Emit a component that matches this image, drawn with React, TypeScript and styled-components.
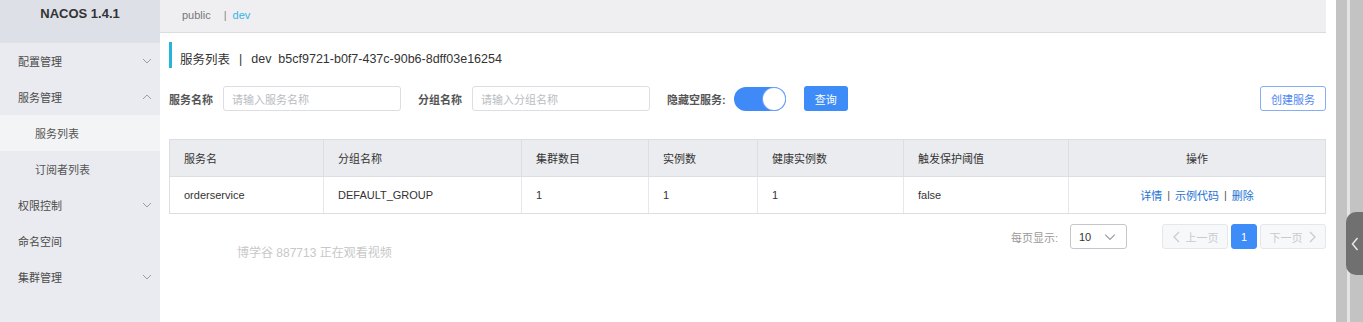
import React from "react";
import styled, { createGlobalStyle } from "styled-components";

const Global = createGlobalStyle`
  html, body { margin: 0; padding: 0; }
  body {
    width: 1363px;
    height: 322px;
    overflow: hidden;
    background: #fff;
    font-family: "Liberation Sans", "Noto Sans CJK SC", Arial, sans-serif;
    font-size: 11px;
    color: #333;
  }
  * { box-sizing: border-box; }
`;

const Page = styled.div`
  display: flex;
  width: 1363px;
  height: 322px;
  position: relative;
`;

const Sidebar = styled.aside`
  width: 160px;
  flex: none;
  background: #eaebf0;
  display: flex;
  flex-direction: column;
`;

const Brand = styled.div`
  height: 43px;
  background: #dde0e7;
  font-weight: bold;
  font-size: 13px;
  color: #333;
  text-align: center;
  padding-top: 6px;
`;

const MenuItem = styled.div<{ $sub?: boolean; $active?: boolean }>`
  height: 36px;
  display: flex;
  align-items: center;
  justify-content: space-between;
  padding-left: ${(p) => (p.$sub ? 35 : 18)}px;
  padding-right: 8px;
  background: ${(p) => (p.$active ? "#f3f4f6" : "transparent")};
  color: ${(p) => (p.$sub ? "#555" : "#4a4a4a")};
  font-size: 11px;
`;

const Chevron = styled.svg`
  width: 10px;
  height: 10px;
  fill: none;
  stroke: #9a9ca3;
  stroke-width: 1;
`;

const Main = styled.main`
  width: 1176px;
  flex: none;
  padding-right: 10px;
  display: flex;
  flex-direction: column;
`;

const NsBar = styled.div`
  height: 33px;
  background: #efeff1;
  border-bottom: 1px solid #dcdcdf;
  display: flex;
  align-items: center;
  padding-left: 22px;
  padding-bottom: 2px;
  font-size: 11px;
  color: #777;
`;

const NsLink = styled.span<{ $active?: boolean }>`
  color: ${(p) => (p.$active ? "#33b5e5" : "#777")};
`;

const NsSep = styled.span`
  margin: 0 6px 0 13px;
  color: #888;
`;

const Content = styled.div`
  padding-left: 9px;
  display: flex;
  flex-direction: column;
  position: relative;
  flex: 1;
`;

const Title = styled.div`
  margin-top: 9px;
  height: 26px;
  border-left: 3px solid #27b4d6;
  padding-left: 8px;
  padding-top: 7px;
  display: flex;
  align-items: center;
  font-size: 12.5px;
  color: #333;
`;

const TitleSep = styled.span`
  margin: 0 9px;
`;

const Form = styled.div`
  margin-top: 18px;
  height: 25px;
  display: flex;
  align-items: center;
`;

const Label = styled.span<{ $gap?: number; $after?: number }>`
  font-size: 11px;
  font-weight: bold;
  color: #555;
  margin-left: ${(p) => p.$gap ?? 0}px;
  margin-right: ${(p) => p.$after ?? 10}px;
`;

const Input = styled.div`
  width: 178px;
  height: 25px;
  border: 1px solid #dcdee3;
  border-radius: 3px;
  padding-left: 8px;
  display: flex;
  align-items: center;
  color: #b9bcc2;
  font-size: 11px;
`;

const Switch = styled.div`
  width: 52px;
  height: 24px;
  border-radius: 12px;
  background: #3f8af7;
  position: relative;
`;

const Knob = styled.div`
  position: absolute;
  right: 1px;
  top: 1px;
  width: 22px;
  height: 22px;
  border-radius: 50%;
  background: #fff;
  box-shadow: 0 0 0 1px #6fa4f8;
`;

const PrimaryButton = styled.div`
  margin-left: 18px;
  width: 44px;
  height: 25px;
  border-radius: 3px;
  background: #3e8cf7;
  color: #fff;
  font-size: 11px;
  display: flex;
  align-items: center;
  justify-content: center;
`;

const OutlineButton = styled.div`
  margin-left: auto;
  width: 66px;
  height: 25px;
  border-radius: 3px;
  border: 1px solid #86aef5;
  color: #4d86f0;
  font-size: 11px;
  display: flex;
  align-items: center;
  justify-content: center;
`;

const Table = styled.div`
  margin-top: 28px;
  border: 1px solid #dcdee3;
  display: grid;
  grid-template-columns: 154px 198px 127px 109px 146px 165px 1fr;
`;

const Th = styled.div<{ $center?: boolean; $last?: boolean }>`
  height: 37px;
  background: #ebecf0;
  border-right: ${(p) => (p.$last ? "none" : "1px solid #dcdee3")};
  border-bottom: 1px solid #dcdee3;
  display: flex;
  align-items: center;
  justify-content: ${(p) => (p.$center ? "center" : "flex-start")};
  padding-left: ${(p) => (p.$center ? 0 : 14)}px;
  color: #333;
  font-size: 11px;
`;

const Td = styled.div<{ $center?: boolean; $last?: boolean }>`
  height: 36px;
  border-right: ${(p) => (p.$last ? "none" : "1px solid #e6e7eb")};
  display: flex;
  align-items: center;
  justify-content: ${(p) => (p.$center ? "center" : "flex-start")};
  padding-left: ${(p) => (p.$center ? 0 : 14)}px;
  color: #333;
  font-size: 11px;
`;

const Link = styled.span`
  color: #1d72d3;
`;

const LinkSep = styled.span`
  color: #555;
  margin: 0 5px;
`;

const Pager = styled.div`
  margin-top: 10px;
  height: 25px;
  display: flex;
  align-items: center;
  justify-content: flex-end;
`;

const PagerLabel = styled.span`
  color: #999;
  font-size: 11px;
  margin-right: 12px;
`;

const Select = styled.div`
  width: 57px;
  height: 25px;
  border: 1px solid #c4c6cc;
  border-radius: 3px;
  display: flex;
  align-items: center;
  justify-content: space-between;
  padding: 0 10px 0 8px;
  font-size: 11px;
  color: #333;
  margin-right: 35px;
`;

const PageBtn = styled.div<{ $w: number; $active?: boolean; $ml?: number }>`
  width: ${(p) => p.$w}px;
  height: 25px;
  margin-left: ${(p) => p.$ml ?? 0}px;
  border-radius: 3px;
  border: 1px solid ${(p) => (p.$active ? "#3e8cf7" : "#e6e7eb")};
  background: ${(p) => (p.$active ? "#3e8cf7" : "#f7f8fa")};
  color: ${(p) => (p.$active ? "#fff" : "#c8cad0")};
  display: flex;
  align-items: center;
  justify-content: center;
  gap: 4px;
  font-size: 11px;
`;

const PagerArrow = styled.svg`
  width: 10px;
  height: 12px;
  fill: none;
  stroke: #c8cad0;
  stroke-width: 1.2;
`;

const Watermark = styled.div`
  position: absolute;
  left: 77px;
  top: 210px;
  color: #c8c8c8;
  font-size: 12px;
`;

const Rail = styled.div`
  width: 27px;
  flex: none;
  display: flex;
`;

const RailStrip = styled.div<{ $w: number; $c: string }>`
  width: ${(p) => p.$w}px;
  background: ${(p) => p.$c};
`;

const Handle = styled.div`
  position: absolute;
  right: 0;
  top: 212px;
  width: 17px;
  height: 63px;
  background: #707070;
  border-radius: 10px 0 0 10px;
  display: flex;
  align-items: center;
  justify-content: center;
`;

const HandleIcon = styled.svg`
  width: 8px;
  height: 14px;
  fill: none;
  stroke: #e8e8e8;
  stroke-width: 1.5;
`;

const Down = () => (
  <Chevron viewBox="0 0 10 10">
    <path d="M1 3l4 4 4-4" />
  </Chevron>
);
const Up = () => (
  <Chevron viewBox="0 0 10 10">
    <path d="M1 7l4-4 4 4" />
  </Chevron>
);

const columns = ["服务名", "分组名称", "集群数目", "实例数", "健康实例数", "触发保护阈值", "操作"];
const row = ["orderservice", "DEFAULT_GROUP", "1", "1", "1", "false"];

export default function App() {
  return (
    <>
      <Global />
      <Page>
        <Sidebar>
          <Brand>NACOS 1.4.1</Brand>
          <MenuItem>
            配置管理
            <Down />
          </MenuItem>
          <MenuItem>
            服务管理
            <Up />
          </MenuItem>
          <MenuItem $sub $active>
            服务列表
          </MenuItem>
          <MenuItem $sub>订阅者列表</MenuItem>
          <MenuItem>
            权限控制
            <Down />
          </MenuItem>
          <MenuItem>命名空间</MenuItem>
          <MenuItem>
            集群管理
            <Down />
          </MenuItem>
        </Sidebar>
        <Main>
          <NsBar>
            <NsLink>public</NsLink>
            <NsSep>|</NsSep>
            <NsLink $active>dev</NsLink>
          </NsBar>
          <Content>
            <Title>
              服务列表<TitleSep>|</TitleSep>dev&nbsp;&nbsp;b5cf9721-b0f7-437c-90b6-8dff03e16254
            </Title>
            <Form>
              <Label>服务名称</Label>
              <Input>请输入服务名称</Input>
              <Label $gap={17}>分组名称</Label>
              <Input>请输入分组名称</Input>
              <Label $gap={17} $after={8}>隐藏空服务:</Label>
              <Switch>
                <Knob />
              </Switch>
              <PrimaryButton>查询</PrimaryButton>
              <OutlineButton>创建服务</OutlineButton>
            </Form>
            <Table>
              {columns.map((c, i) => (
                <Th key={c} $center={i === 6} $last={i === 6}>
                  {c}
                </Th>
              ))}
              {row.map((v, i) => (
                <Td key={i}>{v}</Td>
              ))}
              <Td $center $last>
                <Link>详情</Link>
                <LinkSep>|</LinkSep>
                <Link>示例代码</Link>
                <LinkSep>|</LinkSep>
                <Link>删除</Link>
              </Td>
            </Table>
            <Pager>
              <PagerLabel>每页显示:</PagerLabel>
              <Select>
                10
                <Chevron viewBox="0 0 10 10" style={{ width: 12, height: 12 }}>
                  <path d="M1 3l4 4 4-4" />
                </Chevron>
              </Select>
              <PageBtn $w={66}>
                <PagerArrow viewBox="0 0 10 12">
                  <path d="M7 1L2 6l5 5" />
                </PagerArrow>
                上一页
              </PageBtn>
              <PageBtn $w={26} $active $ml={3}>
                1
              </PageBtn>
              <PageBtn $w={66} $ml={3}>
                下一页
                <PagerArrow viewBox="0 0 10 12">
                  <path d="M3 1l5 5-5 5" />
                </PagerArrow>
              </PageBtn>
            </Pager>
            <Watermark>博学谷 887713 正在观看视频</Watermark>
          </Content>
        </Main>
        <Rail>
          <RailStrip $w={11} $c="#c3c3c3" />
          <RailStrip $w={3} $c="#e4e4e4" />
          <RailStrip $w={13} $c="#c3c3c3" />
        </Rail>
        <Handle>
          <HandleIcon viewBox="0 0 8 14">
            <path d="M6.5 1L1.5 7l5 6" />
          </HandleIcon>
        </Handle>
      </Page>
    </>
  );
}
